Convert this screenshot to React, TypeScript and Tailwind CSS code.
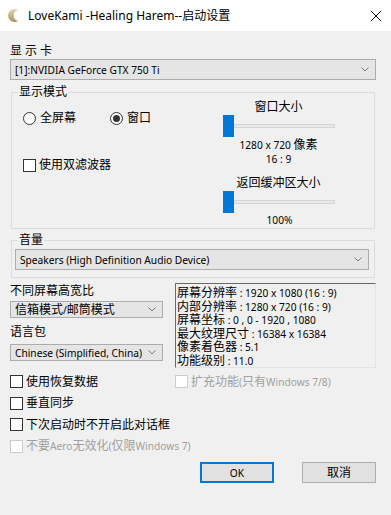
import React from "react";

const CJK = /([\u3000-\u9fff\uff00-\uffef]+)/;

// Latin in the dialog renders smaller than the CJK glyphs, so split the runs
const T = ({ s }: { s: string }) => (
  <>
    {s.split(CJK).map((p, i) =>
      CJK.test(p) ? (
        <span key={i} className="text-[12px] leading-none">
          {p}
        </span>
      ) : (
        <span key={i} className="text-[10.2px] leading-none">
          {p}
        </span>
      )
    )}
  </>
);

const Chevron = () => (
  <svg width="8" height="5" viewBox="0 0 8 5" className="shrink-0">
    <polyline points="0.5,0.5 4,4 7.5,0.5" fill="none" stroke="#7a7a7a" strokeWidth="1" />
  </svg>
);

const Select = ({ value, className }: { value: string; className: string }) => (
  <div
    className={`flex items-center justify-between border border-[#acacac] bg-[#e5e5e5] pl-[4px] pr-[6px] ${className}`}
  >
    <span className="whitespace-nowrap leading-none">
      <T s={value} />
    </span>
    <Chevron />
  </div>
);

const CheckBox = ({ label, disabled }: { label: string; disabled?: boolean }) => (
  <label className={`flex items-center gap-[3px] ${disabled ? "text-[#a0a0a0]" : "text-black"}`}>
    <span
      className={`w-[13px] h-[13px] border bg-white ${disabled ? "border-[#cccccc]" : "border-[#333333]"}`}
    />
    <span className="whitespace-nowrap leading-[16px]">
      <T s={label} />
    </span>
  </label>
);

const Radio = ({ label, checked }: { label: string; checked?: boolean }) => (
  <label className="flex items-center gap-[4px]">
    <span className="w-[13px] h-[13px] rounded-full border border-[#333333] bg-white flex items-center justify-center">
      {checked && <span className="w-[7px] h-[7px] rounded-full bg-[#333333]" />}
    </span>
    <span className="leading-[16px]">{label}</span>
  </label>
);

const Slider = () => (
  <div className="flex items-center h-[22px] pl-[1px]">
    <div className="w-[11px] h-[22px] bg-[#0078d7]" />
    <div className="flex-1 h-[4px] bg-[#e7eaea] border border-[#d6d6d6]" />
  </div>
);

const infoLines = [
  "屏幕分辨率 : 1920 x 1080 (16 : 9)",
  "内部分辨率 : 1280 x 720 (16 : 9)",
  "屏幕坐标 : 0 , 0 - 1920 , 1080",
  "最大纹理尺寸 : 16384 x 16384",
  "像素着色器 : 5.1",
  "功能级别 : 11.0",
];

export default function App() {
  return (
    <div className="w-[391px] h-[515px] overflow-hidden bg-[#f0f0f0] text-[12px] text-black font-['Noto_Sans','Noto_Sans_CJK_SC',sans-serif] flex flex-col">
      {/* Title bar */}
      <div className="h-[31px] bg-white flex items-center pl-[8px] pr-[10px] shrink-0">
        <svg width="13" height="13" viewBox="0 0 13 13">
          <defs>
            <linearGradient id="moon" x1="0" y1="0" x2="0" y2="1">
              <stop offset="0" stopColor="#e2d6b4" />
              <stop offset="1" stopColor="#a8925f" />
            </linearGradient>
          </defs>
          <path
            d="M10.15 1.12 A6.5 6.5 0 1 0 10.15 11.88 A5.5 5.5 0 0 1 10.15 1.12 Z"
            fill="url(#moon)"
          />
        </svg>
        <span className="ml-[7px] whitespace-nowrap">LoveKami -Healing Harem--启动设置</span>
        <svg width="10" height="10" viewBox="0 0 10 10" className="ml-auto">
          <path d="M0 0 L10 10 M10 0 L0 10" stroke="#000" strokeWidth="1" />
        </svg>
      </div>

      <div className="flex flex-col pl-[10px] pr-[15px] pt-[12px]">
        <div className="leading-[16px] tracking-[3px]">显示卡</div>
        <Select value="[1]:NVIDIA GeForce GTX 750 Ti" className="h-[21px]" />

        {/* Display mode */}
        <fieldset className="mt-[5px] mx-[1px] border border-[#dcdcdc] h-[144px]">
          <legend className="ml-[6px] px-[1px] leading-[14px]">显示模式</legend>
          <div className="flex">
            <div className="w-[210px] pl-[11px] flex flex-col">
              <div className="flex mt-[11px]">
                <div className="w-[87px]">
                  <Radio label="全屏幕" />
                </div>
                <Radio label="窗口" checked />
              </div>
              <div className="mt-[31px]">
                <CheckBox label="使用双滤波器" />
              </div>
            </div>
            <div className="w-[113px] flex flex-col items-stretch text-center">
              <div className="leading-[16px]">窗口大小</div>
              <Slider />
              <div className="leading-[14px] mt-[1px]">
                <T s="1280 x 720 像素" />
              </div>
              <div className="leading-[14px]">
                <T s="16 : 9" />
              </div>
              <div className="leading-[16px] mt-[9px]">返回缓冲区大小</div>
              <Slider />
              <div className="leading-[14px] pl-[2px]">
                <T s="100%" />
              </div>
            </div>
          </div>
        </fieldset>

        {/* Volume */}
        <fieldset className="mt-[4px] mx-[1px] border border-[#dcdcdc] pl-[3px] pr-[5px] pb-[7px]">
          <legend className="ml-[3px] px-[1px] leading-[14px]">音量</legend>
          <Select value="Speakers (High Definition Audio Device)" className="h-[21px] mt-[2px]" />
        </fieldset>

        {/* Lower area */}
        <div className="flex">
          <div className="w-[153px] flex flex-col">
            <div className="leading-[16px] mt-[5px]">不同屏幕高宽比</div>
            <Select value="信箱模式/邮筒模式" className="h-[17px] mt-[2px]" />
            <div className="leading-[16px] mt-[6px]">语言包</div>
            <Select value="Chinese (Simplified, China)" className="h-[17px] mt-[4px]" />
          </div>
          <div className="ml-[12px] mt-[5px] w-[201px] h-[85px] overflow-hidden border border-t-[#696969] border-l-[#696969] border-r-[#e3e3e3] border-b-[#e3e3e3] bg-[#f0f0f0] pl-[1px] pt-[2px]">
            {infoLines.map((l) => (
              <div key={l} className="leading-[13.6px] whitespace-nowrap">
                <T s={l} />
              </div>
            ))}
          </div>
        </div>

        {/* Options */}
        <div className="flex flex-col mt-[3px]">
          <div className="h-[21.5px] flex items-center">
            <div className="w-[165px]">
              <CheckBox label="使用恢复数据" />
            </div>
            <CheckBox label="扩充功能(只有Windows 7/8)" disabled />
          </div>
          <div className="h-[21.5px] flex items-center">
            <CheckBox label="垂直同步" />
          </div>
          <div className="h-[21.5px] flex items-center">
            <CheckBox label="下次启动时不开启此对话框" />
          </div>
          <div className="h-[21.5px] flex items-center">
            <CheckBox label="不要Aero无效化(仅限Windows 7)" disabled />
          </div>
        </div>

        <div className="flex justify-end gap-[28px] mt-[5px]">
          <button className="w-[74px] h-[21px] bg-[#e1e1e1] border-2 border-[#0078d7] leading-none">
            <T s="OK" />
          </button>
          <button className="w-[74px] h-[21px] bg-[#e1e1e1] border border-[#adadad] leading-none">取消</button>
        </div>
      </div>
    </div>
  );
}
